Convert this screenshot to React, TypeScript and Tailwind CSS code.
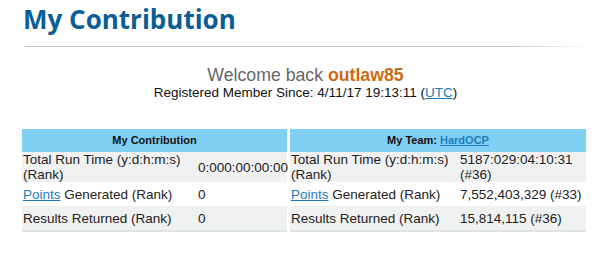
const sans = { fontFamily: '"Liberation Sans", Arial, sans-serif' };

type Row = { label: React.ReactNode; value: string; tall?: boolean; shade?: boolean };

const Lnk = ({ children }: { children: React.ReactNode }) => (
  <a href="#" className="text-[#1b7cc0] underline">
    {children}
  </a>
);

const StatTable = ({
  title,
  rows,
  width,
  cols,
}: {
  title: React.ReactNode;
  rows: Row[];
  width: string;
  cols: string;
}) => (
  <div className={`${width} border-b-2 border-[#e1e4e6]`}>
    <div className="h-[23px] bg-[#82cff4] flex items-center justify-center text-[11px] font-bold text-[#111]">
      {title}
    </div>
    {rows.map((r, i) => (
      <div
        key={i}
        className={`grid ${cols} items-center text-[13.5px] leading-[15px] text-[#222] ${
          r.tall ? "h-[30px]" : "h-[24px]"
        } ${r.shade ? "bg-[#f0f1f1]" : "bg-white"}`}
      >
        <div className="pl-px">{r.label}</div>
        <div className="pl-[3px]">{r.value}</div>
      </div>
    ))}
  </div>
);

export default function App() {
  return (
    <div className="w-[611px] h-[262px] bg-white px-[22px] pt-[3px]" style={sans}>
      <h1
        className="text-[26px] leading-[32px] font-bold text-[#0b5e95] pl-px"
        style={{ fontFamily: '"Open Sans", sans-serif' }}
      >
        My Contribution
      </h1>
      <div className="mt-[11px] ml-[3px] h-px bg-linear-to-r from-[#c2c2c2] from-85% to-white" />

      <div className="mt-[19px] text-center">
        <div className="text-[17.7px] leading-[19px] text-[#666]">
          Welcome back <span className="font-bold text-[#cc6a14]">outlaw85</span>
        </div>
        <div className="text-[13.5px] leading-[15px] text-[#111]">
          Registered Member Since: 4/11/17 19:13:11 (<Lnk>UTC</Lnk>)
        </div>
      </div>

      <div className="mt-[29px] flex gap-[3px]">
        <StatTable
          title="My Contribution"
          width="w-[265px]"
          cols="grid-cols-[173px_1fr]"
          rows={[
            { label: "Total Run Time (y:d:h:m:s) (Rank)", value: "0:000:00:00:00", tall: true, shade: true },
            { label: <><Lnk>Points</Lnk> Generated (Rank)</>, value: "0" },
            { label: "Results Returned (Rank)", value: "0", shade: true },
          ]}
        />
        <StatTable
          title={<span>My Team: <Lnk>HardOCP</Lnk></span>}
          width="w-[296px]"
          cols="grid-cols-[167px_1fr]"
          rows={[
            { label: "Total Run Time (y:d:h:m:s) (Rank)", value: "5187:029:04:10:31 (#36)", tall: true, shade: true },
            { label: <><Lnk>Points</Lnk> Generated (Rank)</>, value: "7,552,403,329 (#33)" },
            { label: "Results Returned (Rank)", value: "15,814,115 (#36)", shade: true },
          ]}
        />
      </div>
    </div>
  );
}
